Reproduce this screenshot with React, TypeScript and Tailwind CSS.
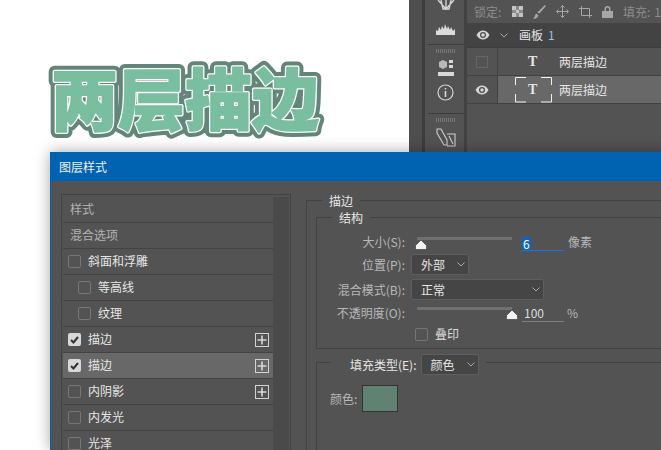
import type { ReactNode } from "react"

const cjk = "font-['Microsoft_YaHei','Noto_Sans_CJK_SC','Noto_Sans',sans-serif]"

function Eye() {
  return (
    <svg width="14" height="10" viewBox="0 0 14 10">
      <path d="M0.5 5C2.5 1.6 4.6 0.5 7 0.5S11.5 1.6 13.5 5C11.5 8.4 9.4 9.5 7 9.5S2.5 8.4 0.5 5Z" fill="#d6d6d6" />
      <circle cx="7" cy="5" r="3" fill="#4a4a4a" />
      <circle cx="7" cy="5" r="1.8" fill="#d6d6d6" />
    </svg>
  )
}

function Chevron({ color = "#a8a8a8" }: { color?: string }) {
  return (
    <svg width="8" height="5" viewBox="0 0 8 5" fill="none">
      <path d="M0.5 0.5L4 4L7.5 0.5" stroke={color} strokeWidth="1" />
    </svg>
  )
}

function Check({ on }: { on?: boolean }) {
  if (on) {
    return (
      <span className="flex h-[13px] w-[13px] shrink-0 items-center justify-center rounded-[2px] bg-[#d8d8d8]">
        <svg width="9" height="8" viewBox="0 0 9 8" fill="none">
          <path d="M1 4L3.5 6.5L8 1" stroke="#333333" strokeWidth="2" />
        </svg>
      </span>
    )
  }
  return <span className="h-[13px] w-[13px] shrink-0 rounded-[2px] border border-[#777777]" />
}

function Plus() {
  return (
    <span className="ml-auto mr-[4px] flex h-[14px] w-[14px] items-center justify-center border border-[#d2d2d2]">
      <svg width="10" height="10" viewBox="0 0 10 10">
        <path d="M5 0.5V9.5M0.5 5H9.5" stroke="#d8d8d8" strokeWidth="1.6" />
      </svg>
    </span>
  )
}

const effects = [
  { label: "样式", plain: true },
  { label: "混合选项", plain: true },
  { label: "斜面和浮雕" },
  { label: "等高线", sub: true },
  { label: "纹理", sub: true },
  { label: "描边", on: true, plus: true },
  { label: "描边", on: true, plus: true, active: true },
  { label: "内阴影", plus: true },
  { label: "内发光" },
  { label: "光泽" },
]

function EffectRow({ item }: { item: (typeof effects)[number] }) {
  return (
    <div
      className={`flex h-[26px] shrink-0 items-center border-b border-[#434343] ${item.active ? "bg-[#686868]" : ""} ${item.plain ? "pl-[7px]" : item.sub ? "pl-[15px]" : "pl-[5px]"}`}
    >
      {!item.plain && <Check on={item.on} />}
      <span className={`-mt-[1px] text-[12px] ${item.plain ? "text-[#b4b4b4]" : "ml-[7px] text-[#e6e6e6]"}`}>{item.label}</span>
      {item.plus && <Plus />}
    </div>
  )
}

function Select({ value, width }: { value: string; width: string }) {
  return (
    <div className={`flex h-[21px] items-center justify-between rounded-[2px] border border-[#5e5e5e] bg-[#454545] pl-[9px] pr-[3px] text-[12px] text-[#e6e6e6] ${width}`}>
      <span>{value}</span>
      <Chevron />
    </div>
  )
}

function Thumb() {
  return (
    <svg width="12" height="10" viewBox="0 0 12 10">
      <path d="M6 0L11.5 5.5V8.5Q11.5 9.5 10.5 9.5H1.5Q0.5 9.5 0.5 8.5V5.5Z" fill="#f2f2f2" stroke="#2f2f2f" strokeWidth="0.6" />
    </svg>
  )
}

function Slider({ end }: { end?: boolean }) {
  return (
    <div className="flex h-[14px] w-[95px] flex-col">
      <div className="h-[3px] bg-[#707070]" />
      <div className={`flex ${end ? "-mr-[6px] justify-end" : "-ml-[2px]"}`}>
        <Thumb />
      </div>
    </div>
  )
}

function Label({ children, width = "w-[88px]" }: { children: ReactNode; width?: string }) {
  return <span className={`text-right text-[12px] text-[#b8b8b8] ${width}`}>{children}</span>
}

function ToolGrip() {
  return <div className="mx-auto h-[4px] w-[19px] bg-[repeating-linear-gradient(90deg,#777777_0_1px,transparent_1px_2px)]" />
}

function LayerRow({ visible, selected }: { visible?: boolean; selected?: boolean }) {
  return (
    <div className="flex h-[28px] border-b border-[#424242]">
      <div className="flex w-[31px] items-center justify-center border-r border-[#424242]">
        {visible ? <Eye /> : <span className="h-[12px] w-[12px] border border-[#666666]" />}
      </div>
      <div className={`relative flex flex-1 items-center ${selected ? "bg-[#686868]" : ""}`}>
        <span className="ml-[30px] w-[31px] font-['Liberation_Serif',serif] text-[14px] font-bold text-[#e4e4e4]">T</span>
        <span className="text-[12px] text-[#e6e6e6]">两层描边</span>
        {selected && (
          <svg className="absolute left-[17px] top-[1px]" width="37" height="26" viewBox="0 0 37 26" fill="none">
            <path d="M0.5 8V0.5H11M26 0.5H36.5V8M36.5 17V25H26M11 25H0.5V17" stroke="#f0f0f0" />
          </svg>
        )}
      </div>
    </div>
  )
}

function ArtText({ stroke, width }: { stroke: string; width: number }) {
  return (
    <text
      x="5"
      y="85"
      fontSize="67"
      fontWeight="900"
      fill={stroke}
      stroke={stroke}
      strokeWidth={width}
      strokeLinejoin="round"
      fontFamily="'Noto Sans CJK SC', sans-serif"
    >
      两层描边
    </text>
  )
}

export default function App() {
  return (
    <div className={`relative h-[450px] w-[661px] overflow-hidden bg-white ${cjk}`}>
      {/* the artwork: three stacked copies give the two strokes */}
      <svg className="absolute left-[46px] top-[40px]" width="300" height="125" viewBox="0 0 300 125">
        <ArtText stroke="#64867a" width={12} />
        <ArtText stroke="#ffffff" width={4} />
        <ArtText stroke="#79be9f" width={1.5} />
      </svg>

      {/* photoshop panels top right */}
      <div className="absolute left-[409px] top-0 flex h-[152px] w-[252px] bg-[#535353]">
        <div className="w-[16px] border-r-[3px] border-[#3d3d3d] bg-[#4e4e4e]" />
        <div className="flex w-[43px] flex-col border-r-[3px] border-[#424242] pl-[3px]">
          <div className="flex h-[45px] flex-col items-center border-b border-[#3c3c3c]">
            <svg width="18" height="11" viewBox="0 0 18 11" fill="none" stroke="#d4d4d4" strokeWidth="1.4">
              <path d="M1 0L9 9L17 0M9 0V10M4 0L6 9H12L14 0" />
            </svg>
            <svg className="mt-[13px]" width="19" height="11" viewBox="0 0 19 11">
              <path d="M0 11V6L2 7L3 3L5 6L6 2L8 5L9 0L11 5L12 2L14 6L15 3L17 7L19 5V11Z" fill="#dcdcdc" />
            </svg>
          </div>
          <div className="flex h-[69px] flex-col items-center border-b border-[#3c3c3c] pt-[4px]">
            <ToolGrip />
            <svg className="mt-[6px]" width="16" height="18" viewBox="0 0 16 18">
              <path d="M1 3L5 1L9 3V8L5 10L1 8Z" fill="#b8b8b8" />
              <path d="M11 1H15V4H11ZM11 6H15V9H11Z" fill="#d8d8d8" />
              <path d="M0 13H16V17H0Z" fill="#d8d8d8" />
            </svg>
            <svg className="mt-[7px]" width="17" height="17" viewBox="0 0 17 17" fill="none">
              <circle cx="8.5" cy="8.5" r="7.5" stroke="#d4d4d4" strokeWidth="1.2" />
              <path d="M8.5 7V13M8.5 4V5.6" stroke="#d4d4d4" strokeWidth="1.6" />
            </svg>
          </div>
          <div className="flex flex-col items-center pt-[4px]">
            <ToolGrip />
            <svg className="mt-[6px]" width="20" height="19" viewBox="0 0 20 19" fill="none" stroke="#cfcfcf" strokeWidth="1.1">
              <path d="M1 1H5L11 12V17H8L1 5ZM11 6H19V18H11M13 8L17 16" />
            </svg>
          </div>
        </div>
        <div className="flex-1">
          <div className="flex h-[23px] items-center gap-[10px] pl-[7px] text-[12px] text-[#8c8c8c]">
            <span className="w-[28px] whitespace-nowrap">锁定:</span>
            <svg width="11" height="11" viewBox="0 0 11 11">
              <path d="M0 0H11V11H0Z" fill="#8a8a8a" />
              <path d="M0 0H4V4H0ZM7 0H11V4H7ZM4 4H7V7H4ZM0 7H4V11H0ZM7 7H11V11H7Z" fill="#c4c4c4" />
            </svg>
            <svg width="13" height="14" viewBox="0 0 12 13" fill="#a6a6a6">
              <path d="M11 0L12 1L6 8L4 7ZM3 8L5 9.5C4.5 12 2 13 0 13C1.5 12 1.5 9 3 8Z" />
            </svg>
            <svg width="13" height="13" viewBox="0 0 13 13" fill="none" stroke="#a6a6a6">
              <path d="M6.5 0.5V12.5M0.5 6.5H12.5M4.5 2.5L6.5 0.5L8.5 2.5M4.5 10.5L6.5 12.5L8.5 10.5M2.5 4.5L0.5 6.5L2.5 8.5M10.5 4.5L12.5 6.5L10.5 8.5" />
            </svg>
            <svg width="13" height="12" viewBox="0 0 13 12" fill="none" stroke="#a6a6a6">
              <path d="M0 2.5H10.5V12M2.5 0V9.5H13" />
            </svg>
            <svg width="11" height="12" viewBox="0 0 11 12" fill="#a6a6a6">
              <path d="M0 5H11V12H0ZM2.5 5V3A3 3 0 0 1 8.5 3V5H7V3A1.5 1.5 0 0 0 4 3V5Z" />
            </svg>
            <span className="whitespace-nowrap">填充:</span>
            <span className="-ml-[6px]">1</span>
          </div>
          <div className="flex h-[25px] items-center border-b border-[#3d3d3d] bg-[#434343] text-[12px] text-[#e6e6e6]">
            <span className="ml-[9px]"><Eye /></span>
            <span className="ml-[10px] flex"><Chevron /></span>
            <span className="ml-[11px]">画板</span>
            <span className="ml-[5px] text-[#8cc4ee]">1</span>
          </div>
          <LayerRow />
          <LayerRow visible selected />
        </div>
      </div>

      {/* layer style dialog */}
      <div className="absolute left-[50px] top-[152px] h-[298px] w-[640px] border-l border-[#0063b1] bg-[#535353] shadow-[0_0_14px_rgba(0,0,0,0.35)]">
        <div className="flex h-[29px] items-center bg-[#0063b1] pl-[8px] text-[12px] text-[#f2f2f2]">图层样式</div>
        <div className="flex items-start">
          <div className="ml-[10px] mt-[13px] flex h-[270px] w-[230px] border border-[#424242] px-[1px] pt-[2px]">
            <div className="flex w-[210px] flex-col">
              {effects.map((item, i) => (
                <EffectRow key={i} item={item} />
              ))}
            </div>
            <div className="flex-1 bg-[#4a4a4a]" />
          </div>

          <div className="ml-[15px] mt-[11px] flex-1">
            <fieldset className="border-l border-t border-[#424242] pl-[9px]">
              <legend className="ml-[6px] px-[7px] text-[12px] leading-[17px] text-[#e6e6e6]">描边</legend>
              <fieldset className="h-[140px] border-b border-l border-t border-[#424242]">
                <legend className="ml-[15px] px-[7px] text-[12px] leading-[17px] text-[#e6e6e6]">结构</legend>
                <div className="mt-[7px] flex h-[18px] items-start">
                  <Label>大小(S):</Label>
                  <div className="ml-[12px] pt-[4px]"><Slider /></div>
                  <div className="ml-[10px] flex h-[18px] w-[42px] items-end border-b border-[#1473e6] text-[12px] leading-[13px] text-white">
                    <span className="bg-[#0a64c8] px-px">6</span>
                  </div>
                  <span className="ml-[4px] text-[12px] text-[#b8b8b8]">像素</span>
                </div>
                <div className="mt-[3px] flex items-center">
                  <Label>位置(P):</Label>
                  <span className="ml-[6px]"><Select value="外部" width="w-[58px]" /></span>
                </div>
                <div className="mt-[4px] flex items-center">
                  <Label>混合模式(B):</Label>
                  <span className="ml-[6px]"><Select value="正常" width="w-[133px]" /></span>
                </div>
                <div className="mt-[4px] flex h-[18px] items-start">
                  <Label>不透明度(O):</Label>
                  <div className="ml-[12px] pt-[3px]"><Slider end /></div>
                  <div className="ml-[10px] flex h-[18px] w-[42px] items-center border-b border-[#808080] pl-[2px] text-[12px] leading-none text-[#dcdcdc]">100</div>
                  <span className="ml-[3px] text-[12px] text-[#b8b8b8]">%</span>
                </div>
                <div className="ml-[98px] mt-[3px] flex items-center gap-[7px] text-[12px] text-[#dcdcdc]">
                  <Check />
                  <span>叠印</span>
                </div>
              </fieldset>
              <fieldset className="mt-[1px] border-l border-t border-[#424242]">
                <legend className="ml-[14px] flex items-center pl-[19px] pr-[7px] pt-[4px] text-[12px] text-[#e6e6e6]">
                  <span className="mr-[4px]">填充类型(E):</span>
                  <Select value="颜色" width="w-[58px]" />
                </legend>
                <div className="ml-[13px] mt-[10px] flex items-center gap-[5px] text-[12px] text-[#b8b8b8]">
                  <span>颜色:</span>
                  <span className="h-[27px] w-[36px] border border-[#333333] bg-[#5f8273]" />
                </div>
                <div className="h-[40px]" />
              </fieldset>
            </fieldset>
          </div>
        </div>
      </div>
    </div>
  )
}
